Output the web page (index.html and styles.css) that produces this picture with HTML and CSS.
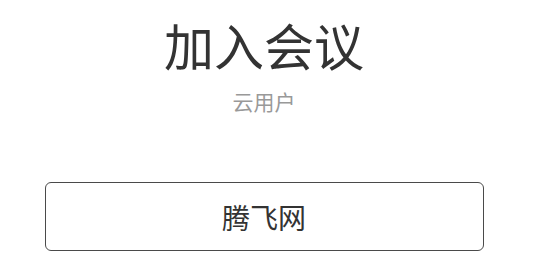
FILE: index.html
```html
<!DOCTYPE html>
<html lang="zh">
<head>
<meta charset="utf-8">
<link rel="stylesheet" href="styles.css">
</head>
<body>
<div class="page">
  <h1 class="title">加入会议</h1>
  <div class="subtitle">云用户</div>
  <button class="btn">腾飞网</button>
</div>
</body>
</html>
```
FILE: styles.css
```css
html, body {
  margin: 0;
  padding: 0;
  background: #ffffff;
}
.page {
  display: flex;
  flex-direction: column;
  align-items: center;
  font-family: "Noto Sans CJK SC", "Noto Sans", sans-serif;
  padding-top: 12px;
  padding-right: 5px;
}
.title {
  margin: 0;
  font-size: 50px;
  font-weight: 400;
  line-height: 64px;
  color: #333333;
}
.subtitle {
  margin-top: 11px;
  font-size: 21px;
  line-height: 28px;
  color: #999999;
}
.btn {
  margin-top: 67px;
  width: 439px;
  height: 69px;
  box-sizing: border-box;
  border: 1px solid #4a4a4a;
  border-radius: 6px;
  background: #ffffff;
  font-family: "Noto Sans CJK SC", "Noto Sans", sans-serif;
  font-size: 28px;
  color: #333333;
  padding: 0;
}
```
